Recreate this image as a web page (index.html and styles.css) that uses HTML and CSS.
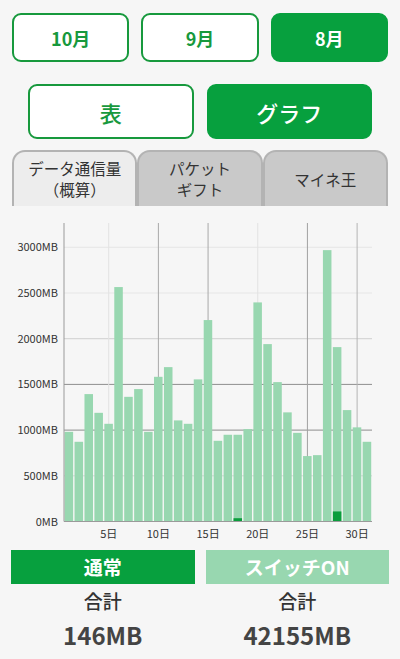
FILE: index.html
```html
<!DOCTYPE html>
<html lang="ja">
<head>
    <meta charset="UTF-8">
    <meta name="viewport" content="width=device-width, initial-scale=1.0">
    <title>データ通信量</title>
    <link rel="stylesheet" href="styles.css">
</head>
<body>
    <div class="month-row">
        <button class="month-btn">10月</button>
        <button class="month-btn">9月</button>
        <button class="month-btn active">8月</button>
    </div>
    <div class="view-row">
        <button class="view-btn">表</button>
        <button class="view-btn active">グラフ</button>
    </div>
    <div class="tabs">
        <div class="tab active">データ通信量<br>（概算）</div>
        <div class="tab">パケット<br>ギフト</div>
        <div class="tab">マイネ王</div>
    </div>

    <div class="chart">
        <svg id="chart" width="400" height="344" viewBox="0 206 400 344"></svg>
    </div>

    <div class="legend">
        <div class="legend-col">
            <div class="legend-label normal">通常</div>
            <div class="legend-sub">合計</div>
            <div class="legend-total">146MB</div>
        </div>
        <div class="legend-col">
            <div class="legend-label switch">スイッチON</div>
            <div class="legend-sub">合計</div>
            <div class="legend-total">42155MB</div>
        </div>
    </div>

    <script>
        const chart = document.getElementById('chart');
        const NS = 'http://www.w3.org/2000/svg';

        // 1日〜31日の通信量 (MB)
        const switchOn = [981, 872, 1394, 1189, 1069, 2565, 1364, 1449, 981, 1583,
            1689, 1106, 1069, 1555, 2204, 883, 949, 949, 1011, 2397,
            1941, 1525, 1194, 970, 716, 726, 2969, 1908, 1219, 1030, 872];
        const normal = {18: 36, 28: 110};

        const plotLeft = 64, plotRight = 372, plotTop = 223, zeroY = 521.5;
        const slot = (plotRight - plotLeft) / 31;
        const perMB = 45.7 / 500;

        function el(name, attrs, text) {
            const node = document.createElementNS(NS, name);
            for (const key in attrs) {
                node.setAttribute(key, attrs[key]);
            }
            if (text) node.textContent = text;
            chart.appendChild(node);
            return node;
        }

        // 横の目盛り線
        const hColors = ['#888', '#d8d8d8', '#8e8e8e', '#8e8e8e', '#cfcfcf', '#e6e6e6', '#e6e6e6'];
        for (let i = 0; i <= 6; i++) {
            const y = zeroY - i * 500 * perMB;
            if (i > 0) {
                el('line', {x1: plotLeft, x2: plotRight, y1: y, y2: y, stroke: hColors[i], 'stroke-width': 1});
            }
            el('text', {x: 58, y: y + 4, class: 'axis-label', 'text-anchor': 'end'}, (i * 500) + 'MB');
        }

        // 縦の目盛り線
        const vColors = {5: '#e2e2e2', 10: '#a8a8a8', 15: '#a8a8a8', 20: '#e2e2e2', 25: '#a0a0a0', 30: '#b4b4b4'};
        for (const day in vColors) {
            const x = plotLeft + (day - 0.5) * slot;
            el('line', {x1: x, x2: x, y1: plotTop, y2: zeroY, stroke: vColors[day], 'stroke-width': 1});
            el('text', {x: x, y: 538, class: 'axis-label', 'text-anchor': 'middle'}, day + '日');
        }

        // 棒グラフ
        switchOn.forEach((mb, i) => {
            const h = mb * perMB;
            el('rect', {x: plotLeft + i * slot + 0.6, y: zeroY - h, width: slot - 1.4, height: h, fill: '#98d7b0'});
            const n = normal[i + 1];
            if (n) {
                const nh = n * perMB;
                el('rect', {x: plotLeft + i * slot + 0.6, y: zeroY - nh, width: slot - 1.4, height: nh, fill: '#0a9d3c'});
            }
        });

        // 軸
        el('line', {x1: plotLeft, x2: plotLeft, y1: plotTop, y2: zeroY, stroke: '#9a9a9a', 'stroke-width': 1});
        el('line', {x1: plotLeft, x2: plotRight, y1: zeroY, y2: zeroY, stroke: '#9a9a9a', 'stroke-width': 1});
    </script>
</body>
</html>
```

FILE: styles.css
```css
body {
    font-family: "Noto Sans CJK JP", "Noto Sans", sans-serif;
    background-color: #f6f6f6;
    color: #333;
    margin: 0;
    padding: 0;
}

button {
    font-family: inherit;
    cursor: pointer;
}

.month-row {
    display: flex;
    gap: 12px;
    padding: 13px 12px 0;
}

.month-btn {
    flex: 1;
    height: 49px;
    border: 2px solid #17993d;
    border-radius: 9px;
    background-color: #fff;
    color: #17993d;
    font-size: 18px;
    font-weight: bold;
}

.month-btn.active {
    background-color: #07a03e;
    border-color: #07a03e;
    color: #fff;
}

.view-row {
    display: flex;
    gap: 13px;
    padding: 0 28px;
    margin-top: 22px;
}

.view-btn {
    flex: 1;
    height: 55px;
    border: 2px solid #17993d;
    border-radius: 9px;
    background-color: #fff;
    color: #17993d;
    font-size: 22px;
    font-weight: 500;
}

.view-btn.active {
    background-color: #07a03e;
    border-color: #07a03e;
    color: #fff;
}

.tabs {
    display: flex;
    margin: 11px 12px 0;
}

.tab {
    flex: 1;
    height: 54px;
    display: flex;
    align-items: center;
    justify-content: center;
    text-align: center;
    border: 2px solid #b3b3b3;
    border-bottom: none;
    border-radius: 13px 13px 0 0;
    background-color: #c9c9c9;
    font-size: 15.5px;
    line-height: 21px;
    color: #333;
}

.tab.active {
    background-color: #ededed;
}

.chart svg {
    display: block;
}

.axis-label {
    font-size: 11px;
    fill: #333;
}

.legend {
    display: flex;
    gap: 11px;
    padding: 0 11px;
}

.legend-col {
    flex: 1;
    text-align: center;
}

.legend-label {
    height: 34px;
    line-height: 34px;
    color: #fff;
    font-size: 19px;
    font-weight: bold;
}

.legend-label.normal {
    background-color: #07a03e;
}

.legend-label.switch {
    background-color: #98d7b0;
}

.legend-sub {
    margin-top: 4px;
    font-size: 19px;
    line-height: 26px;
    font-weight: 500;
    color: #333;
}

.legend-total {
    margin-top: 5px;
    font-size: 24px;
    line-height: 32px;
    font-weight: bold;
    color: #444;
}
```
